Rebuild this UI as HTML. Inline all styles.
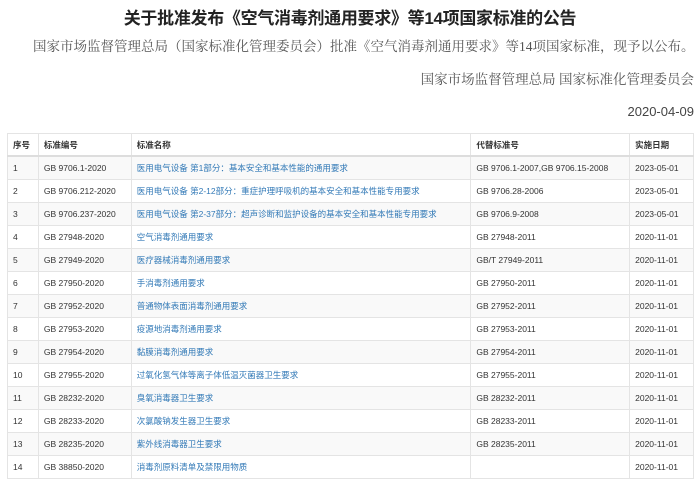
<!DOCTYPE html>
<html><head><meta charset="utf-8"><style>
body{margin:0;width:700px;height:480px;background:#fff;font-family:"Liberation Sans","Noto Sans CJK SC",sans-serif;color:#333;overflow:hidden;position:relative}
h1{position:absolute;top:4px;left:0;width:700px;text-align:center;font-size:17px;font-weight:bold;margin:0;color:#222;letter-spacing:-0.3px}
.p{position:absolute;top:35px;left:33px;font-size:13.5px;color:#555;font-family:"Liberation Serif","Noto Serif CJK SC",serif;white-space:nowrap}
.s{position:absolute;top:68px;right:6px;font-size:13.5px;color:#555;font-family:"Liberation Serif","Noto Serif CJK SC",serif;white-space:nowrap}
.d{position:absolute;top:104px;right:6px;font-size:13px;color:#444}
table{position:absolute;top:133px;left:7px;width:687px;border-collapse:collapse;font-size:8.5px}
td,th{border:1px solid #e4e4e4;height:22px;padding:0 0 0 5px;text-align:left;white-space:nowrap}
th{font-weight:bold;color:#333;border-bottom:2px solid #ddd;height:21px}
tbody tr:nth-child(odd){background:#f9f9f9}
td:nth-child(3){color:#337ab7}
</style></head><body>
<h1>关于批准发布《空气消毒剂通用要求》等14项国家标准的公告</h1>
<div class="p">国家市场监督管理总局（国家标准化管理委员会）批准《空气消毒剂通用要求》等14项国家标准，现予以公布。</div>
<div class="s">国家市场监督管理总局 国家标准化管理委员会</div>
<div class="d">2020-04-09</div>
<table>
<colgroup><col style="width:31px"><col style="width:93px"><col style="width:340px"><col style="width:159px"><col style="width:64px"></colgroup>
<thead><tr><th>序号</th><th>标准编号</th><th>标准名称</th><th>代替标准号</th><th>实施日期</th></tr></thead>
<tbody>
<tr><td>1</td><td>GB 9706.1-2020</td><td>医用电气设备 第1部分：基本安全和基本性能的通用要求</td><td>GB 9706.1-2007,GB 9706.15-2008</td><td>2023-05-01</td></tr>
<tr><td>2</td><td>GB 9706.212-2020</td><td>医用电气设备 第2-12部分：重症护理呼吸机的基本安全和基本性能专用要求</td><td>GB 9706.28-2006</td><td>2023-05-01</td></tr>
<tr><td>3</td><td>GB 9706.237-2020</td><td>医用电气设备 第2-37部分：超声诊断和监护设备的基本安全和基本性能专用要求</td><td>GB 9706.9-2008</td><td>2023-05-01</td></tr>
<tr><td>4</td><td>GB 27948-2020</td><td>空气消毒剂通用要求</td><td>GB 27948-2011</td><td>2020-11-01</td></tr>
<tr><td>5</td><td>GB 27949-2020</td><td>医疗器械消毒剂通用要求</td><td>GB/T 27949-2011</td><td>2020-11-01</td></tr>
<tr><td>6</td><td>GB 27950-2020</td><td>手消毒剂通用要求</td><td>GB 27950-2011</td><td>2020-11-01</td></tr>
<tr><td>7</td><td>GB 27952-2020</td><td>普通物体表面消毒剂通用要求</td><td>GB 27952-2011</td><td>2020-11-01</td></tr>
<tr><td>8</td><td>GB 27953-2020</td><td>疫源地消毒剂通用要求</td><td>GB 27953-2011</td><td>2020-11-01</td></tr>
<tr><td>9</td><td>GB 27954-2020</td><td>黏膜消毒剂通用要求</td><td>GB 27954-2011</td><td>2020-11-01</td></tr>
<tr><td>10</td><td>GB 27955-2020</td><td>过氧化氢气体等离子体低温灭菌器卫生要求</td><td>GB 27955-2011</td><td>2020-11-01</td></tr>
<tr><td>11</td><td>GB 28232-2020</td><td>臭氧消毒器卫生要求</td><td>GB 28232-2011</td><td>2020-11-01</td></tr>
<tr><td>12</td><td>GB 28233-2020</td><td>次氯酸钠发生器卫生要求</td><td>GB 28233-2011</td><td>2020-11-01</td></tr>
<tr><td>13</td><td>GB 28235-2020</td><td>紫外线消毒器卫生要求</td><td>GB 28235-2011</td><td>2020-11-01</td></tr>
<tr><td>14</td><td>GB 38850-2020</td><td>消毒剂原料清单及禁限用物质</td><td></td><td>2020-11-01</td></tr>
</tbody></table>
</body></html>
